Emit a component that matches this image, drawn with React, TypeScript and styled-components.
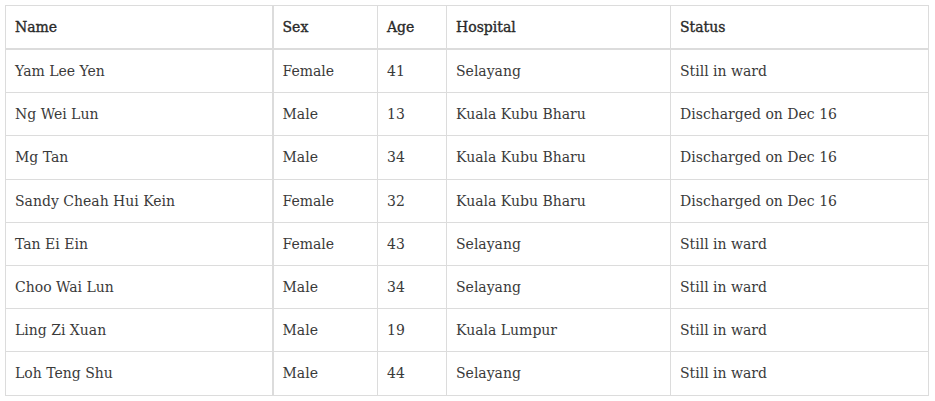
import React from "react";
import styled, { createGlobalStyle } from "styled-components";

interface Patient {
  name: string;
  sex: string;
  age: number;
  hospital: string;
  status: string;
}

const patients: Patient[] = [
  { name: "Yam Lee Yen", sex: "Female", age: 41, hospital: "Selayang", status: "Still in ward" },
  { name: "Ng Wei Lun", sex: "Male", age: 13, hospital: "Kuala Kubu Bharu", status: "Discharged on Dec 16" },
  { name: "Mg Tan", sex: "Male", age: 34, hospital: "Kuala Kubu Bharu", status: "Discharged on Dec 16" },
  { name: "Sandy Cheah Hui Kein", sex: "Female", age: 32, hospital: "Kuala Kubu Bharu", status: "Discharged on Dec 16" },
  { name: "Tan Ei Ein", sex: "Female", age: 43, hospital: "Selayang", status: "Still in ward" },
  { name: "Choo Wai Lun", sex: "Male", age: 34, hospital: "Selayang", status: "Still in ward" },
  { name: "Ling Zi Xuan", sex: "Male", age: 19, hospital: "Kuala Lumpur", status: "Still in ward" },
  { name: "Loh Teng Shu", sex: "Male", age: 44, hospital: "Selayang", status: "Still in ward" },
];

const columns = [
  { key: "name", label: "Name", width: 267 },
  { key: "sex", label: "Sex", width: 105 },
  { key: "age", label: "Age", width: 69 },
  { key: "hospital", label: "Hospital", width: 224 },
  { key: "status", label: "Status", width: 258 },
] as const;

const GlobalStyle = createGlobalStyle`
  body {
    margin: 0;
    background: #ffffff;
    font-family: "DejaVu Serif", "Liberation Serif", serif;
    color: #333333;
  }
`;

const Wrapper = styled.div`
  padding: 5px;
`;

const Table = styled.table`
  width: 923px;
  border-collapse: collapse;
  table-layout: fixed;
  border: 1px solid #dcdcdc;
`;

const HeadCell = styled.th<{ $first?: boolean }>`
  height: 42px;
  padding: 0 9px;
  text-align: left;
  font-size: 14px;
  font-weight: 400;
  color: #2a2a2a;
  -webkit-text-stroke: 0.35px #2a2a2a;
  border-bottom: 2px solid #dcdcdc;
  border-right: ${({ $first }) => ($first ? "2px" : "1px")} solid #dcdcdc;
`;

const Cell = styled.td<{ $first?: boolean }>`
  height: 42.2px;
  padding: 0 9px;
  font-size: 14px;
  color: #3a3a3a;
  border-bottom: 1px solid #dcdcdc;
  border-right: ${({ $first }) => ($first ? "2px" : "1px")} solid #dcdcdc;
`;

export default function App() {
  return (
    <Wrapper>
      <GlobalStyle />
      <Table>
        <colgroup>
          {columns.map((c) => (
            <col key={c.key} style={{ width: c.width }} />
          ))}
        </colgroup>
        <thead>
          <tr>
            {columns.map((c, i) => (
              <HeadCell key={c.key} $first={i === 0}>
                {c.label}
              </HeadCell>
            ))}
          </tr>
        </thead>
        <tbody>
          {patients.map((p) => (
            <tr key={p.name}>
              <Cell $first>{p.name}</Cell>
              <Cell>{p.sex}</Cell>
              <Cell>{p.age}</Cell>
              <Cell>{p.hospital}</Cell>
              <Cell>{p.status}</Cell>
            </tr>
          ))}
        </tbody>
      </Table>
    </Wrapper>
  );
}
